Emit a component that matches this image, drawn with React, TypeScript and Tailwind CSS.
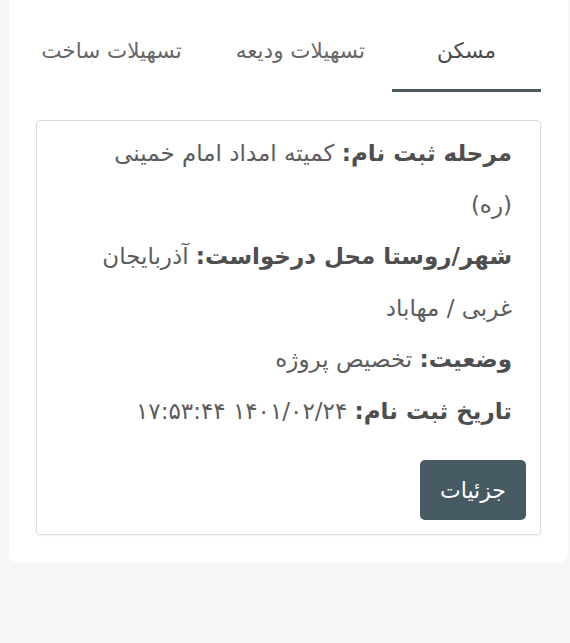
import React from 'react';

const tabs = ['مسکن', 'تسهیلات ودیعه', 'تسهیلات ساخت'];

const rows: { label: string; value: string }[] = [
  { label: 'مرحله ثبت نام:', value: 'کمیته امداد امام خمینی (ره)' },
  { label: 'شهر/روستا محل درخواست:', value: 'آذربایجان غربی / مهاباد' },
  { label: 'وضعیت:', value: 'تخصیص پروژه' },
  { label: 'تاریخ ثبت نام:', value: '۱۴۰۱/۰۲/۲۴ ۱۷:۵۳:۴۴' },
];

export default function App() {
  return (
    <div
      dir="rtl"
      className="min-h-[643px] bg-[#f6f7f9] pl-[9px] pr-[2px]"
      style={{ fontFamily: '"DejaVu Sans", sans-serif' }}
    >
      <div className="rounded-b-[8px] bg-white px-[27px] pb-[27px]">
        <div className="flex h-[92px] overflow-hidden">
          {tabs.map((tab, i) => (
            <div
              key={tab}
              className={
                'flex min-w-[149px] shrink-0 items-center justify-center whitespace-nowrap border-b-[3px] px-[27px] pt-[14px] text-[21.5px] ' +
                (i === 0 ? 'border-[#4a5a5f] text-[#4a4a4a]' : 'border-transparent text-[#666666]')
              }
            >
              {tab}
            </div>
          ))}
        </div>

        <div className="mt-[28px] rounded-[4px] border border-[#dcdcdc] p-[14px] shadow-[0_1px_2px_rgba(0,0,0,0.05)]">
          <div className="-mt-[7px] pl-[15px] pr-[14px]">
            {rows.map((row) => (
              <p key={row.label} className="text-[23px] leading-[51.5px] text-[#5c5c5c]">
                <span className="font-bold text-[#4e4e4e]">{row.label}</span> {row.value}
              </p>
            ))}
          </div>
          <div className="mt-[23px] flex">
            <button
              type="button"
              className="h-[60px] w-[106px] rounded-[5px] bg-[#465a64] text-[22px] text-white"
            >
              جزئیات
            </button>
          </div>
        </div>
      </div>
    </div>
  );
}
